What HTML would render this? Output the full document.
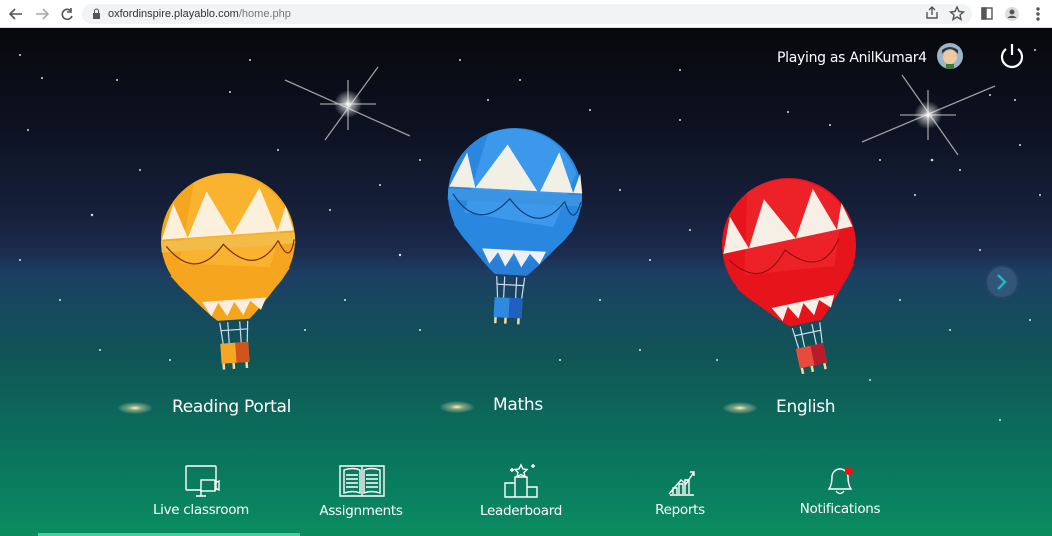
<!DOCTYPE html>
<html><head><meta charset="utf-8"><style>
*{margin:0;padding:0;box-sizing:border-box}
body{width:1052px;height:536px;overflow:hidden;font-family:"Liberation Sans",sans-serif;background:#fff;position:relative}
.chrome{position:absolute;left:0;top:0;width:1052px;height:28px;background:#fff;border-bottom:1px solid #ddd}
.url{position:absolute;left:82px;top:4px;width:890px;height:20px;border-radius:10px;background:#f1f3f4;font-size:11px;color:#333;line-height:20px;padding-left:26px}
.url span{color:#777}
.stage{position:absolute;left:0;top:28px;width:1052px;height:508px;background:linear-gradient(180deg,#08080c 0px,#0d1222 100px,#16213c 190px,#1b2c4e 225px,#1d3e62 245px,#17475f 275px,#105556 330px,#0c6b5b 400px,#0a8160 470px,#0a8d5f 508px)}
.lbl{position:absolute;color:#fff;font-size:17px;font-family:"DejaVu Sans",sans-serif;letter-spacing:-0.3px}
.nav{position:absolute;color:#fff;font-size:13.5px;font-family:"DejaVu Sans",sans-serif;letter-spacing:-0.3px;text-align:center;width:140px}
</style></head><body>
<div class="chrome">
<svg width="80" height="28" style="position:absolute;left:0;top:0" fill="none" stroke="#555" stroke-width="1.6">
<path d="M22 14H10M15 9l-5 5 5 5"/><path d="M36 14h12M43 9l5 5-5 5" stroke="#aaa"/>
<path d="M71 11a5 5 0 1 0 1 5M71 8v4h-4"/></svg>
<div class="url">oxfordinspire.playablo.com<span>/home.php</span></div>
<svg width="10" height="12" style="position:absolute;left:92px;top:8px"><rect x="1" y="5" width="7" height="6" fill="#555"/><path d="M2.5 5V3a2 2 0 0 1 4 0v2" stroke="#555" fill="none"/></svg>
<svg width="130" height="28" style="position:absolute;left:922px;top:0" fill="none" stroke="#555" stroke-width="1.4">
<path d="M5 12v6h10v-6M10 15V8M7 10l3-3 3 3"/><path d="M35 7l2 4.5 4.5.5-3.5 3 1 4.5-4-2.5-4 2.5 1-4.5-3.5-3 4.5-.5z"/>
<rect x="60" y="8" width="10" height="11"/><rect x="60" y="8" width="4" height="11" fill="#555"/>
<circle cx="90" cy="14" r="7" fill="#ddd" stroke="none"/><circle cx="90" cy="12" r="2.5" fill="#555" stroke="none"/><path d="M85.5 18a5 4 0 0 1 9 0" fill="#555" stroke="none"/>
<circle cx="116" cy="9" r="1" fill="#555"/><circle cx="116" cy="14" r="1" fill="#555"/><circle cx="116" cy="19" r="1" fill="#555"/></svg>
</div>
<div class="stage">
<svg width="1052" height="508" viewBox="0 28 1052 508" style="position:absolute;left:0;top:0">
<defs>
<radialGradient id="sp"><stop offset="0" stop-color="#fff"/><stop offset=".3" stop-color="#fff" stop-opacity=".6"/><stop offset="1" stop-color="#fff" stop-opacity="0"/></radialGradient>
<radialGradient id="sp2"><stop offset="0" stop-color="#fff8d0"/><stop offset=".4" stop-color="#f0d890" stop-opacity=".5"/><stop offset="1" stop-color="#fff" stop-opacity="0"/></radialGradient>
</defs>
<g fill="#fff" opacity=".85">
<circle cx="20" cy="55" r="1"/><circle cx="42" cy="78" r="1"/><circle cx="117" cy="80" r="1"/><circle cx="28" cy="130" r="1"/><circle cx="92" cy="215" r="1.2"/><circle cx="140" cy="170" r="1"/><circle cx="230" cy="92" r="1"/><circle cx="278" cy="150" r="1"/><circle cx="280" cy="205" r="1"/><circle cx="330" cy="210" r="1"/><circle cx="380" cy="185" r="1"/><circle cx="420" cy="160" r="1"/><circle cx="400" cy="255" r="1.2"/><circle cx="345" cy="300" r="1"/><circle cx="305" cy="330" r="1"/><circle cx="420" cy="330" r="1"/><circle cx="590" cy="110" r="1"/><circle cx="620" cy="190" r="1"/><circle cx="650" cy="260" r="1"/><circle cx="600" cy="300" r="1"/><circle cx="680" cy="120" r="1"/><circle cx="690" cy="230" r="1"/><circle cx="560" cy="360" r="1"/><circle cx="640" cy="350" r="1"/><circle cx="488" cy="100" r="1"/><circle cx="520" cy="80" r="1"/><circle cx="788" cy="112" r="1"/><circle cx="830" cy="125" r="1"/><circle cx="880" cy="160" r="1"/><circle cx="932" cy="160" r="1.3"/><circle cx="960" cy="170" r="1"/><circle cx="1020" cy="145" r="1"/><circle cx="1040" cy="195" r="1"/><circle cx="915" cy="195" r="1"/><circle cx="980" cy="250" r="1"/><circle cx="900" cy="300" r="1"/><circle cx="950" cy="330" r="1"/><circle cx="1030" cy="320" r="1"/><circle cx="870" cy="380" r="1"/><circle cx="1000" cy="420" r="1"/><circle cx="60" cy="300" r="1"/><circle cx="20" cy="260" r="1"/><circle cx="100" cy="350" r="1"/><circle cx="170" cy="360" r="1"/><circle cx="717" cy="360" r="1"/><circle cx="760" cy="290" r="1"/><circle cx="1015" cy="100" r="1"/><circle cx="1035" cy="50" r="1"/><circle cx="990" cy="95" r="1"/><circle cx="680" cy="70" r="1"/><circle cx="460" cy="60" r="1"/><circle cx="250" cy="60" r="1"/>
</g>
<!-- sparkles -->
<g stroke="#ccc" stroke-width="1.3" opacity=".75">
<path d="M285 80L410 136M378 67L325 140M348 80V130M320 104H376"/>
<path d="M862 142L995 86M902 75L958 155M928 90V140M900 115H956"/>
</g>
<circle cx="348" cy="104" r="14" fill="url(#sp)"/><circle cx="928" cy="115" r="14" fill="url(#sp)"/>
<ellipse cx="135" cy="408" rx="18" ry="6" fill="url(#sp2)"/><ellipse cx="457" cy="407" rx="18" ry="6" fill="url(#sp2)"/><ellipse cx="740" cy="408" rx="18" ry="6" fill="url(#sp2)"/>
<!-- orange balloon -->
<g transform="translate(228,240) rotate(-4)">
<path d="M-60 32Q-30 68-16 80H16Q30 68 60 32Z" fill="#f4a51c"/>
<circle r="67" fill="#f6a61e"/><path d="M-30-60A67 67 0 0 1 60-25L40 30-50 20Z" fill="#fbb934" opacity=".7"/>
<path d="M-66 -5L-52-40-40-5ZM-40-5L-18-50 5-5ZM5-5L35-50 50-5ZM50-5L60-30 66-5Z" fill="#fbf0dc"/>
<path d="M-67 -3H67V8H-67Z" fill="#f3bb48"/>
<path d="M-62 2Q-35 40-5 4Q25 40 50 4M50 4Q60 30 66 4" fill="none" stroke="#7a2a10" stroke-width="1.2"/>
<path d="M-30 60L-22 75-14 62-6 76 2 62 10 76 18 62 28 72 34 60Z" fill="#fbeee0"/>
<path d="M-14 82L-12 104M14 82L12 104M-6 82V104M6 82V104M-14 90H14" stroke="#cde" stroke-width="1.2"/>
<rect x="-15" y="103" width="28" height="20" fill="#f5a623"/><rect x="0" y="103" width="13" height="20" fill="#d0541c"/>
<path d="M-13 123v6M-3 123v6M10 123v6" stroke="#f3d9a0" stroke-width="2.5"/>
</g>
<!-- blue balloon -->
<g transform="translate(515,195) rotate(3)">
<path d="M-60 32Q-30 68-16 80H16Q30 68 60 32Z" fill="#2a7ed8"/>
<circle r="67" fill="#2a87e0"/><path d="M-30-60A67 67 0 0 1 60-25L40 30-50 20Z" fill="#44a0ef" opacity=".7"/>
<path d="M-66 -5L-50-40-40-5ZM-40-5L-10-50 22-5ZM25-5L42-45 58-5ZM58-5L64-25 67-5Z" fill="#f2f0e4"/>
<path d="M-67 -3H67V8H-67Z" fill="#3b94e2"/>
<path d="M-62 2Q-35 40-5 4Q25 40 50 4M50 4Q60 30 66 4" fill="none" stroke="#0f3f80" stroke-width="1.2"/>
<path d="M-30 55L-22 70-14 58-6 72 2 58 10 72 18 58 28 68 34 55Z" fill="#eef0f4"/>
<path d="M-14 82L-12 104M14 82L12 104M-6 82V104M6 82V104M-14 90H14" stroke="#cde" stroke-width="1.2"/>
<rect x="-15" y="103" width="28" height="20" fill="#2e8ae0"/><rect x="0" y="103" width="13" height="20" fill="#1f5fbf"/>
<path d="M-13 123v6M-3 123v6M10 123v6" stroke="#f3d9a0" stroke-width="2.5"/>
</g>
<!-- red balloon -->
<g transform="translate(789,245) rotate(-12)">
<path d="M-60 32Q-30 68-16 80H16Q30 68 60 32Z" fill="#e8121a"/>
<circle r="67" fill="#e8141c"/><path d="M-30-60A67 67 0 0 1 60-25L40 30-50 20Z" fill="#f0282e" opacity=".7"/>
<path d="M-66 -5L-52-40-40-5ZM-40-5L-15-50 8-5ZM8-5L35-50 50-5ZM50-5L60-30 66-5Z" fill="#f6efe6"/>
<path d="M-62 2Q-35 40-5 4Q25 40 50 4" fill="none" stroke="#8a0a0a" stroke-width="1"/>
<path d="M-30 58L-22 73-14 60-6 74 2 60 10 74 18 60 28 70 34 58Z" fill="#f6eee8"/>
<path d="M-14 82L-12 104M14 82L12 104M-6 82V104M6 82V104M-14 90H14" stroke="#cde" stroke-width="1.2"/>
<rect x="-15" y="103" width="28" height="20" fill="#e84a3c"/><rect x="0" y="103" width="13" height="20" fill="#b81c2a"/>
<path d="M-13 123v6M-3 123v6M10 123v6" stroke="#f3d9a0" stroke-width="2.5"/>
</g>
<!-- next arrow -->
<circle cx="1002" cy="282" r="16" fill="#3a5d80" opacity=".75" stroke="#2b4660" stroke-width="2"/>
<path d="M998 275l7 7-7 7" fill="none" stroke="#1fb7c0" stroke-width="2.5"/>
<!-- avatar & power -->
<circle cx="950" cy="56" r="13" fill="#9bb6c8"/><circle cx="950" cy="57" r="7" fill="#f1c8a0"/><path d="M942 54q8-10 16 0v-4q-8-6-16 0z" fill="#333"/><rect x="946" y="64" width="8" height="5" fill="#3a7a3a"/>
<path d="M1006 49a10 10 0 1 0 12 0" fill="none" stroke="#fff" stroke-width="2.2"/><path d="M1012 44v11" stroke="#fff" stroke-width="2.2"/>
<!-- nav icons -->
<g fill="none" stroke="#fff" stroke-width="1.4">
<rect x="186" y="466" width="30" height="24" rx="1"/><path d="M196 496h10M201 490v6"/><rect x="201" y="480" width="14" height="11" fill="#0b7a5c"/><path d="M215 483l4-2v9l-4-2"/>
<path d="M340 466h44v30h-44zM362 467v29M344 470q9-3 16 0v23q-7-3-16 0zM380 470q-9-3-16 0v23q7-3 16 0zM346 475h12M346 479h12M346 483h12M346 487h12M366 475h12M366 479h12M366 483h12M366 487h12"/>
<path d="M505 483h10v14h-10zM515 477h12v20h-12zM527 487h10v10h-10z"/><path d="M521 465l2 4 4 .5-3 3 1 4-4-2-4 2 1-4-3-3 4-.5z"/><path d="M510 470h4M512 468v4M531 466h4M533 464v4"/>
<path d="M669 494l12-14 5 4 8-12M690 472h4v4M670 495h24M673 494v-6h4v6M679 494v-10h4v10M685 494v-14h4v14"/>
<path d="M829 489q3-4 3-12a8 8 0 0 1 16 0q0 8 3 12zM836 491q4 5 8 0"/>
</g>
<circle cx="849" cy="471" r="4" fill="#f21010"/>
<rect x="38" y="533" width="262" height="3" fill="#3fd2a0"/>
</svg>
<div class="lbl" style="left:777px;top:22px;font-size:14px">Playing as AnilKumar4</div>
<div class="lbl" style="left:172px;top:369px">Reading Portal</div>
<div class="lbl" style="left:493px;top:367px">Maths</div>
<div class="lbl" style="left:776px;top:369px">English</div>
<div class="nav" style="left:131px;top:474px">Live classroom</div>
<div class="nav" style="left:291px;top:475px">Assignments</div>
<div class="nav" style="left:451px;top:475px">Leaderboard</div>
<div class="nav" style="left:610px;top:474px">Reports</div>
<div class="nav" style="left:770px;top:473px">Notifications</div>
</div>
</body></html>
